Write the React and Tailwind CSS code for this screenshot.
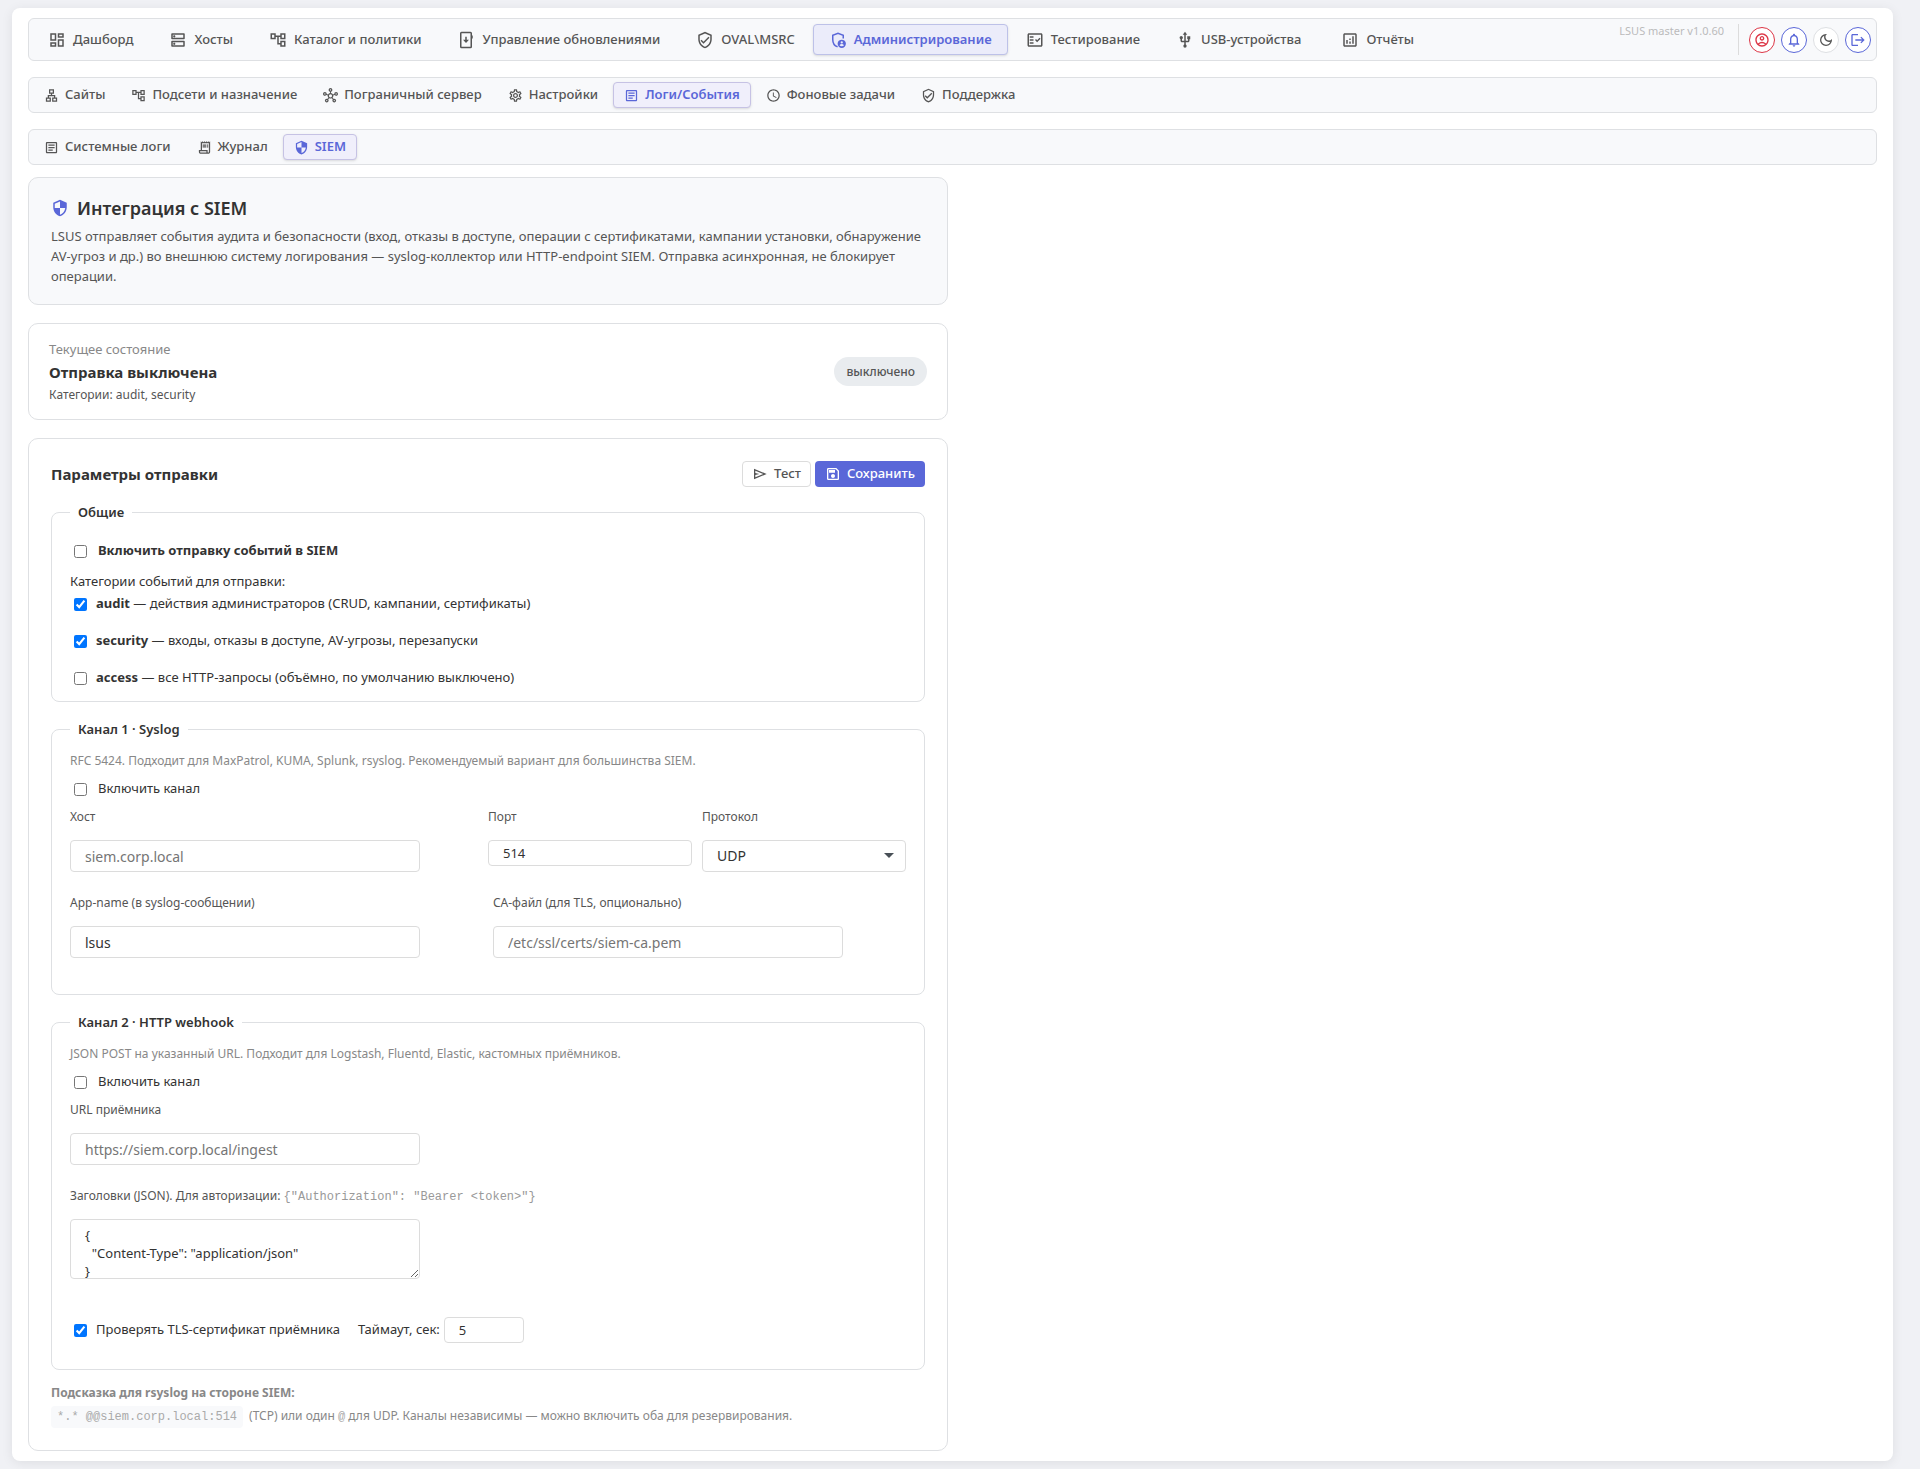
import {
  MdLogout,
  MdNotificationsNone,
  MdOutlineAccountCircle,
  MdOutlineAccountTree,
  MdOutlineAnalytics,
  MdOutlineArticle,
  MdOutlineDarkMode,
  MdOutlineDashboard,
  MdOutlineDns,
  MdOutlineFactCheck,
  MdOutlineHub,
  MdOutlineLan,
  MdOutlineReceiptLong,
  MdOutlineSave,
  MdOutlineSettings,
  MdOutlineVerifiedUser,
  MdSchedule,
  MdSecurity,
  MdUsb,
} from "react-icons/md";
import clsx from "clsx";

// Phone with a download arrow
function UpdateIcon({ size }) {
  return (
    <svg width={size} height={size} viewBox="0 0 24 24" fill="none" stroke="currentColor" strokeWidth="2">
      <rect x="5" y="2" width="14" height="20" rx="1" />
      <path d="M20 6v4" />
      <path d="M12 7.5v5" />
      <path d="M8 11.5h8l-4 4.5z" fill="currentColor" stroke="none" />
    </svg>
  );
}

// Shield with a user badge in the corner
function AdminIcon({ size }) {
  return (
    <svg width={size} height={size} viewBox="0 0 24 24" fill="none">
      <path d="M11.5 21C7.5 19.8 5 15.700 5 11.2V5.700L12 3l7 2.700V10" stroke="currentColor" strokeWidth="2" />
      <circle cx="17" cy="17" r="5.5" fill="currentColor" />
      <circle cx="17" cy="15.2" r="1.5" fill="#ebecfa" />
      <path d="M14 19c.8-1.1 1.8-1.6 3-1.6s2.2.5 3 1.6c-.8.9-1.8 1.4-3 1.4s-2.2-.5-3-1.4z" fill="#ebecfa" />
    </svg>
  );
}

function SendIcon({ size }) {
  return (
    <svg width={size} height={size} viewBox="0 -960 960 960" fill="currentColor">
      <path d="M120-160v-640l760 320-760 320Zm80-120 474-200-474-200v140l240 60-240 60v140Zm0 0v-400 400Z" />
    </svg>
  );
}

const mainNav = [
  { label: "Дашборд", icon: MdOutlineDashboard },
  { label: "Хосты", icon: MdOutlineDns, wide: true },
  { label: "Каталог и политики", icon: MdOutlineAccountTree },
  { label: "Управление обновлениями", icon: UpdateIcon, wide: true },
  { label: "OVAL\\MSRC", icon: MdOutlineVerifiedUser },
  { label: "Администрирование", icon: AdminIcon, active: true },
  { label: "Тестирование", icon: MdOutlineFactCheck },
  { label: "USB-устройства", icon: MdUsb, wide: true },
  { label: "Отчёты", icon: MdOutlineAnalytics, wide: true },
];

const adminNav = [
  { label: "Сайты", icon: MdOutlineLan },
  { label: "Подсети и назначение", icon: MdOutlineAccountTree },
  { label: "Пограничный сервер", icon: MdOutlineHub },
  { label: "Настройки", icon: MdOutlineSettings },
  { label: "Логи/События", icon: MdOutlineArticle, active: true },
  { label: "Фоновые задачи", icon: MdSchedule },
  { label: "Поддержка", icon: MdOutlineVerifiedUser },
];

const logsNav = [
  { label: "Системные логи", icon: MdOutlineArticle },
  { label: "Журнал", icon: MdOutlineReceiptLong },
  { label: "SIEM", icon: MdSecurity, active: true },
];

const categories = [
  { id: "audit", text: "действия администраторов (CRUD, кампании, сертификаты)", on: true },
  { id: "security", text: "входы, отказы в доступе, AV-угрозы, перезапуски", on: true },
  { id: "access", text: "все HTTP-запросы (объёмно, по умолчанию выключено)", on: false },
];

const inputBase = "block rounded border border-[#dcdcdc] bg-white px-3.5 text-[#333] placeholder:text-[#757575]";
const inputLg = clsx(inputBase, "h-8 text-sm");
const inputSm = clsx(inputBase, "h-[26px] text-[13px]");

function MainNavItem({ label, icon: Icon, active, wide }) {
  return (
    <a
      href="#"
      className={clsx(
        "flex h-[31px] items-center gap-[7px] rounded border text-[13px] whitespace-nowrap",
        active && "border-[#bdc1e8] bg-[#ebecfa] px-[15px] font-semibold text-[#5a67d8] shadow-sm",
        !active && "border-transparent font-medium text-[#555]",
        !active && (wide ? "px-[17px]" : "px-[13px]")
      )}
    >
      <Icon size={18} />
      {label}
    </a>
  );
}

function SubNav({ items, label }) {
  return (
    <nav aria-label={label} className="mt-4 flex gap-1 rounded-md border border-[#dee0e3] bg-[#f8f9fb] p-1">
      {items.map(({ label, icon: Icon, active }) => (
        <a
          key={label}
          href="#"
          className={clsx(
            "flex h-[26px] items-center gap-1.5 rounded border px-2.5 text-[13px] whitespace-nowrap",
            active
              ? "border-[#c6c2e4] bg-[#f0effb] font-semibold text-[#5a67d8] shadow-sm"
              : "border-transparent font-medium text-[#555]"
          )}
        >
          <Icon size={15} />
          {label}
        </a>
      ))}
    </nav>
  );
}

function RoundButton({ label, icon: Icon, className }) {
  return (
    <button
      type="button"
      aria-label={label}
      className={clsx("flex size-[26px] items-center justify-center rounded-full border bg-white", className)}
    >
      <Icon size={16} />
    </button>
  );
}

function Section({ title, className, children }) {
  return (
    <fieldset className={clsx("rounded-lg border border-[#dee0e3] px-[18px]", className)}>
      <legend className="px-2 text-[13px] leading-5 font-semibold text-[#333]">{title}</legend>
      {children}
    </fieldset>
  );
}

function Check({ id, checked, className, children }) {
  return (
    <div className={clsx("flex h-5 items-center pl-1 text-[13px] text-[#333]", className)}>
      <input id={id} type="checkbox" defaultChecked={checked} className="size-[13px]" />
      <label htmlFor={id}>{children}</label>
    </div>
  );
}

function Field({ id, label, children }) {
  return (
    <div className="h-[86px]">
      <label htmlFor={id} className="mb-[13px] block text-xs leading-5 text-[#555]">
        {label}
      </label>
      {children}
    </div>
  );
}

function App() {
  return (
    <div className="min-h-screen bg-[#f0f1f5] py-2 pr-[27px] pl-3 font-['Noto_Sans',sans-serif] text-[#333]">
      <div className="rounded-lg bg-white px-4 py-2.5 shadow-[0_2px_12px_rgba(0,0,0,0.08)]">
        <header className="flex rounded-md border border-[#dee0e3] bg-[#f8f9fb] p-[5px]">
          <nav aria-label="Главное меню" className="flex gap-1">
            {mainNav.map((item) => (
              <MainNavItem key={item.label} {...item} />
            ))}
          </nav>
          <div className="ml-auto flex">
            <span className="mr-3.5 text-[11px] leading-[14px] text-[#bbb]">LSUS master v1.0.60</span>
            <div className="flex items-center gap-1.5 border-l border-[#dcdcdc] pl-2.5">
              <RoundButton label="Профиль" icon={MdOutlineAccountCircle} className="border-[#dc3545] text-[#dc3545]" />
              <RoundButton label="Уведомления" icon={MdNotificationsNone} className="border-[#5a67d8] text-[#5a67d8]" />
              <RoundButton label="Тёмная тема" icon={MdOutlineDarkMode} className="border-[#dee0e3] text-[#555]" />
              <RoundButton label="Выйти" icon={MdLogout} className="border-[#5a67d8] text-[#5a67d8]" />
            </div>
          </div>
        </header>

        <SubNav items={adminNav} label="Администрирование" />
        <SubNav items={logsNav} label="Логи и события" />

        <main className="mt-3 max-w-[920px]">
          {/* Заголовок */}
          <section className="rounded-[10px] border border-[#dee0e3] bg-[#f8f9fb] px-[22px] pt-[17px] pb-[18px]">
            <h1 className="mb-[5px] flex h-[26px] items-center gap-2 text-lg font-semibold">
              <MdSecurity size={18} className="text-[#5a67d8]" />
              Интеграция с SIEM
            </h1>
            <p className="text-[13px] leading-5 text-[#555]">
              LSUS отправляет события аудита и безопасности (вход, отказы в доступе, операции с сертификатами, кампании
              установки, обнаружение AV-угроз и др.) во внешнюю систему логирования — syslog-коллектор или HTTP-endpoint
              SIEM. Отправка асинхронная, не блокирует операции.
            </p>
          </section>

          {/* Состояние */}
          <section className="mt-[18px] flex items-center justify-between rounded-[10px] border border-[#dee0e3] px-5 py-[15px]">
            <div>
              <p className="text-[13px] leading-5 text-[#888]">Текущее состояние</p>
              <p className="text-[15px] leading-[26px] font-bold">Отправка выключена</p>
              <p className="text-xs leading-[19px] text-[#555]">Категории: audit, security</p>
            </div>
            <span className="flex h-[29px] items-center rounded-full bg-[#e9ecef] px-3 text-xs font-medium text-[#555]">
              выключено
            </span>
          </section>

          {/* Параметры */}
          <section className="mt-[18px] rounded-[10px] border border-[#dee0e3] px-[22px] py-[22px]">
            <div className="flex h-[26px] items-center gap-1">
              <h2 className="mr-auto text-[15px] font-bold">Параметры отправки</h2>
              <button
                type="button"
                className="flex h-[26px] items-center gap-1.5 rounded border border-[#dcdcdc] bg-white px-[9px] text-[13px] font-medium text-[#555]"
              >
                <SendIcon size={16} />
                Тест
              </button>
              <button
                type="button"
                className="flex h-[26px] items-center gap-1.5 rounded bg-[#5a67d8] px-2.5 text-[13px] font-medium text-white"
              >
                <MdOutlineSave size={16} />
                Сохранить
              </button>
            </div>

            <Section title="Общие" className="mt-[15px] pb-[13px]">
              <Check id="enabled" className="mt-[19px] gap-[11px] font-bold">
                Включить отправку событий в SIEM
              </Check>
              <p className="mt-2.5 text-[13px] leading-5">Категории событий для отправки:</p>
              <div className="mt-[3px] flex flex-col gap-[17px]">
                {categories.map((c) => (
                  <Check key={c.id} id={c.id} checked={c.on} className="gap-[9px]">
                    <strong>{c.id}</strong> — {c.text}
                  </Check>
                ))}
              </div>
            </Section>

            <Section title="Канал 1 · Syslog" className="mt-[17px] pb-[15px]">
              <p className="mt-3 text-xs leading-5 text-[#888]">
                RFC 5424. Подходит для MaxPatrol, KUMA, Splunk, rsyslog. Рекомендуемый вариант для большинства SIEM.
              </p>
              <Check id="syslog-on" className="mt-2 gap-[11px]">
                Включить канал
              </Check>
              <div className="mt-2 grid grid-cols-[2fr_1fr_1fr] gap-x-2.5">
                <Field id="host" label="Хост">
                  <input id="host" type="text" placeholder="siem.corp.local" className={clsx(inputLg, "w-[350px]")} />
                </Field>
                <Field id="port" label="Порт">
                  <input id="port" type="text" inputMode="numeric" defaultValue="514" className={clsx(inputSm, "w-full")} />
                </Field>
                <Field id="protocol" label="Протокол">
                  <div className="relative">
                    <select id="protocol" defaultValue="UDP" className={clsx(inputLg, "w-full appearance-none")}>
                      <option>UDP</option>
                      <option>TCP</option>
                      <option>TLS</option>
                    </select>
                    <svg
                      viewBox="0 0 10 5"
                      className="pointer-events-none absolute top-[13px] right-3 h-[5px] w-2.5 fill-[#495057]"
                    >
                      <path d="M0 0h10L5 5z" />
                    </svg>
                  </div>
                </Field>
              </div>
              <div className="grid grid-cols-2 gap-x-2.5">
                <Field id="app-name" label="App-name (в syslog-сообщении)">
                  <input id="app-name" type="text" defaultValue="lsus" className={clsx(inputLg, "w-[350px]")} />
                </Field>
                <Field id="ca-file" label="CA-файл (для TLS, опционально)">
                  <input id="ca-file" type="text" placeholder="/etc/ssl/certs/siem-ca.pem" className={clsx(inputLg, "w-[350px]")} />
                </Field>
              </div>
            </Section>

            <Section title="Канал 2 · HTTP webhook" className="mt-[17px] pb-[26px]">
              <p className="mt-3 text-xs leading-5 text-[#888]">
                JSON POST на указанный URL. Подходит для Logstash, Fluentd, Elastic, кастомных приёмников.
              </p>
              <Check id="http-on" className="mt-2 gap-[11px]">
                Включить канал
              </Check>
              <div className="mt-2">
                <Field id="url" label="URL приёмника">
                  <input id="url" type="text" placeholder="https://siem.corp.local/ingest" className={clsx(inputLg, "w-[350px]")} />
                </Field>
                <label htmlFor="headers" className="mb-[13px] block text-xs leading-5 text-[#555]">
                  Заголовки (JSON). Для авторизации:{" "}
                  <code className="font-['Liberation_Mono',monospace] text-xs text-[#999]">
                    {'{"Authorization": "Bearer <token>"}'}
                  </code>
                </label>
                <textarea
                  id="headers"
                  defaultValue={'{\n  "Content-Type": "application/json"\n}'}
                  className={clsx(inputBase, "h-[60px] w-[350px] overflow-hidden py-1.5 text-[13px] leading-[18px]")}
                />
              </div>
              <div className="mt-[38px] flex h-[26px] items-center text-[13px]">
                <Check id="verify" checked className="mr-[18px] gap-[9px]">
                  Проверять TLS-сертификат приёмника
                </Check>
                <label htmlFor="timeout" className="mr-1">
                  Таймаут, сек:
                </label>
                <input id="timeout" type="text" inputMode="numeric" defaultValue="5" className={clsx(inputSm, "w-20")} />
              </div>
            </Section>

            {/* Подсказка */}
            <div className="mt-3 text-xs text-[#888]">
              <p className="leading-[22px] font-bold">Подсказка для rsyslog на стороне SIEM:</p>
              <p className="leading-6">
                <code className="mr-1.5 rounded bg-[#f8f9fb] px-1.5 py-1 font-['Liberation_Mono',monospace] text-xs text-[#aaa]">
                  *.* @@siem.corp.local:514
                </code>
                (TCP) или один <code className="font-['Liberation_Mono',monospace] text-xs text-[#aaa]">@</code> для UDP.
                Каналы независимы — можно включить оба для резервирования.
              </p>
            </div>
          </section>
        </main>
      </div>
    </div>
  );
}

export default App;
